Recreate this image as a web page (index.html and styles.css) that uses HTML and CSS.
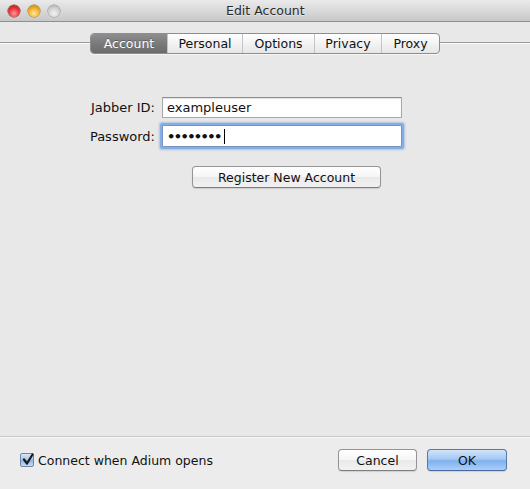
FILE: index.html
```html
<!DOCTYPE html>
<html>
<head>
<meta charset="utf-8">
<link rel="stylesheet" href="styles.css">
</head>
<body>
<div class="window">
  <div class="titlebar">
    <div class="lights">
      <span class="light red"></span>
      <span class="light yellow"></span>
      <span class="light gray"></span>
    </div>
    <div class="title">Edit Account</div>
  </div>
  <div class="content">
    <div class="tabrow">
      <div class="tabs">
        <div class="tab selected">Account</div>
        <div class="tab">Personal</div>
        <div class="tab">Options</div>
        <div class="tab">Privacy</div>
        <div class="tab">Proxy</div>
      </div>
    </div>
    <div class="form">
      <label class="label">Jabber ID:</label>
      <div class="field">exampleuser</div>
      <label class="label">Password:</label>
      <div class="field focused"><span class="dots">••••••••</span><span class="caret"></span></div>
    </div>
    <div class="register-row">
      <button class="btn register">Register New Account</button>
    </div>
  </div>
  <div class="footer">
    <div class="check">
      <span class="checkbox">
        <svg width="14" height="14" viewBox="0 0 14 14"><path d="M3 6.5 L6 10.5 L11.5 1.5" fill="none" stroke="#1b1b1b" stroke-width="2.2" stroke-linecap="round" stroke-linejoin="round"/></svg>
      </span>
      <span class="check-label">Connect when Adium opens</span>
    </div>
    <div class="buttons">
      <button class="btn cancel">Cancel</button>
      <button class="btn ok">OK</button>
    </div>
  </div>
</div>
</body>
</html>
```

FILE: styles.css
```css
* { box-sizing: border-box; }
html, body { margin: 0; padding: 0; }
body {
  width: 530px;
  height: 489px;
  overflow: hidden;
  font-family: "DejaVu Sans", "Liberation Sans", sans-serif;
  font-size: 13px;
  color: #111;
  background: #ececec;
}
.window {
  width: 530px;
  height: 489px;
  display: flex;
  flex-direction: column;
  background: #e8e8e8;
}
.titlebar {
  height: 22px;
  flex: none;
  display: flex;
  align-items: center;
  background: linear-gradient(to bottom, #eaeaea 0%, #d6d6d6 60%, #c8c8c8 100%);
  border-bottom: 1px solid #8f8f8f;
  padding-left: 8px;
}
.lights {
  display: flex;
  gap: 8px;
  width: 200px;
}
.light {
  width: 12px;
  height: 12px;
  border-radius: 50%;
  display: block;
}
.red {
  background: radial-gradient(circle at 50% 70%, #ff9a9a 0%, #e8343a 50%, #a8101a 100%);
  box-shadow: 0 0 0 0.5px #8a2020;
}
.yellow {
  background: radial-gradient(circle at 50% 70%, #ffe9a0 0%, #f2b22b 50%, #b4700c 100%);
  box-shadow: 0 0 0 0.5px #9a6a10;
}
.gray {
  background: radial-gradient(circle at 50% 70%, #f4f4f4 0%, #cfcfcf 55%, #9a9a9a 100%);
  box-shadow: 0 0 0 0.5px #888;
}
.title {
  flex: 1;
  text-align: left;
  padding-left: 18px;
  font-size: 12.5px;
  color: #2a2a2a;
  text-shadow: 0 1px 0 rgba(255,255,255,0.5);
}
.content {
  flex: 1;
  display: flex;
  flex-direction: column;
  border-bottom: 1px solid #c9c9c9;
}
.tabrow {
  margin-top: 11px;
  display: flex;
  justify-content: flex-start;
  padding-left: 90px;
  background: linear-gradient(to bottom, transparent 9px, #9a9a9a 9px, #9a9a9a 10px, #fafafa 10px, #fafafa 11px, transparent 11px);
}
.tabs {
  display: flex;
  height: 21px;
  border: 1px solid #8e8e8e;
  border-radius: 4px;
  overflow: hidden;
  background: linear-gradient(to bottom, #ffffff 0%, #f3f3f3 50%, #e6e6e6 100%);
  box-shadow: 0 1px 0 rgba(255,255,255,0.6);
}
.tab {
  display: flex;
  align-items: center;
  justify-content: center;
  height: 100%;
  font-size: 12.5px;
  color: #111;
  border-left: 1px solid #c4c4c4;
}
.tab:nth-child(1) { width: 76px; border-left: none; }
.tab:nth-child(2) { width: 75px; }
.tab:nth-child(3) { width: 72px; }
.tab:nth-child(4) { width: 67px; }
.tab:nth-child(5) { width: 58px; }
.tab.selected {
  background: linear-gradient(to bottom, #8e8e8e 0%, #7a7a7a 50%, #6c6c6c 100%);
  color: #fff;
  text-shadow: 0 -1px 0 rgba(0,0,0,0.3);
}
.form {
  margin-top: 43px;
  display: grid;
  grid-template-columns: 155px 240px;
  column-gap: 7px;
  row-gap: 7px;
  align-items: center;
}
.label {
  text-align: right;
  font-size: 13px;
  color: #111;
}
.field {
  height: 21px;
  background: #fff;
  border: 1px solid #a9a9a9;
  border-top-color: #8d8d8d;
  box-shadow: inset 0 1px 1px rgba(0,0,0,0.12);
  padding: 0 4px;
  display: flex;
  align-items: center;
  font-size: 13px;
}
.field.focused {
  height: 22px;
  border-color: #7a95bd;
  box-shadow: 0 0 0 2px #86aee6, 0 0 2px 3px rgba(110,160,230,0.5);
  border-radius: 1px;
}
.dots {
  font-size: 13px;
  letter-spacing: -1.6px;
  font-weight: bold;
}
.caret {
  display: block;
  width: 1px;
  height: 15px;
  background: #000;
  margin-left: 3px;
}
.register-row {
  margin-top: 19px;
  padding-left: 192px;
  display: flex;
}
.btn {
  font-family: "DejaVu Sans", "Liberation Sans", sans-serif;
  font-size: 12.5px;
  color: #111;
  height: 22px;
  border: 1px solid #959595;
  border-bottom-color: #7e7e7e;
  border-radius: 4px;
  background: linear-gradient(to bottom, #ffffff 0%, #f5f5f5 50%, #e9e9e9 51%, #f2f2f2 100%);
  box-shadow: 0 1px 1px rgba(0,0,0,0.12);
  padding: 0;
  margin: 0;
}
.register { width: 189px; }
.footer {
  height: 52px;
  flex: none;
  display: flex;
  align-items: flex-start;
  justify-content: space-between;
  background: #ececec;
  padding: 11px 23px 0 20px;
  border-top: 1px solid #f6f6f6;
}
.check {
  display: flex;
  align-items: center;
  gap: 4px;
  height: 22px;
}
.checkbox {
  width: 14px;
  height: 14px;
  display: block;
  border: 1px solid #6f86a8;
  border-radius: 2px;
  background: linear-gradient(to bottom, #d9e6f7 0%, #a9c3e8 50%, #8db1e3 51%, #c6dcf7 100%);
}
.checkbox svg { display: block; margin: -1px 0 0 0; }
.check-label { font-size: 12.5px; }
.buttons {
  display: flex;
  gap: 10px;
}
.cancel { width: 79px; }
.ok {
  width: 80px;
  border-color: #5a79a8;
  border-bottom-color: #4a669a;
  background: linear-gradient(to bottom, #d2e4fb 0%, #a4c8f4 45%, #7fb0ee 55%, #a9d0fb 100%);
}
```
